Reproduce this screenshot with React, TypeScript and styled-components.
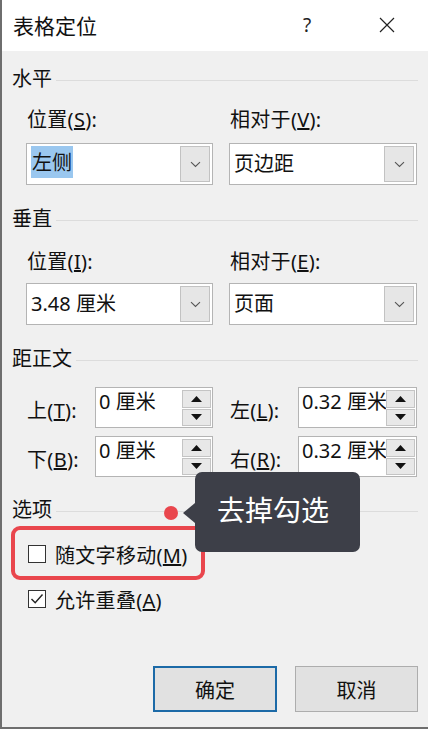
import styled, { createGlobalStyle } from "styled-components";

const GlobalStyle = createGlobalStyle`
  html, body {
    margin: 0;
    padding: 0;
    background: #f0f0f0;
  }
  body {
    font-family: "Noto Sans", "Noto Sans CJK SC", sans-serif;
    color: #111;
  }
`;

const Window = styled.div`
  position: relative;
  width: 428px;
  height: 729px;
  box-sizing: border-box;
  display: flex;
  flex-direction: column;
  border-left: 2px solid #6e6e6e;
  border-bottom: 2px solid #6e6e6e;
  background: #f0f0f0;
  overflow: hidden;
`;

const TitleBar = styled.div`
  height: 51px;
  flex-shrink: 0;
  background: #fff;
  display: flex;
  align-items: center;
  padding-left: 11px;
  padding-bottom: 2px;
  box-sizing: border-box;
`;

const Title = styled.div`
  font-size: 21px;
  flex: 1;
`;

const TitleButton = styled.div<{ $gap?: number }>`
  width: 36px;
  display: flex;
  justify-content: center;
  font-size: 19px;
  color: #222;
  margin-right: ${(p) => p.$gap ?? 0}px;
`;

const Body = styled.div`
  flex: 1;
  display: flex;
  flex-direction: column;
  padding: 16px 10px 15px 10px;
`;

const GroupHeader = styled.div<{ $top: number }>`
  display: flex;
  align-items: center;
  gap: 4px;
  font-size: 20px;
  line-height: 24px;
  margin-top: ${(p) => p.$top}px;

  &::after {
    content: "";
    flex: 1;
    height: 1px;
    background: #dcdcdc;
    margin-top: 2px;
  }
`;

const FieldGrid = styled.div<{ $top: number; $gap?: number }>`
  display: grid;
  grid-template-columns: 187px 188px;
  column-gap: 16px;
  row-gap: ${(p) => p.$gap ?? 0}px;
  padding-left: 14px;
  margin-top: ${(p) => p.$top}px;
`;

const FieldLabel = styled.div`
  font-size: 20px;
  line-height: 24px;
  padding-left: 1px;
  letter-spacing: 0.3px;
`;

const Combo = styled.div<{ $top: number }>`
  height: 42px;
  box-sizing: border-box;
  margin-top: ${(p) => p.$top}px;
  background: #fff;
  border: 1px solid #b4b4b4;
  display: flex;
  align-items: stretch;
  padding: 2px;
`;

const ComboText = styled.div`
  flex: 1;
  display: flex;
  align-items: center;
  font-size: 20px;
  padding: 0 0 4px 2px;
  white-space: nowrap;
`;

const Selected = styled.span`
  background: #9ac7ef;
  padding: 1px 1px 2px;
`;

const ComboButton = styled.div`
  width: 30px;
  background: #e6e6e6;
  border: 1px solid #c2c2c2;
  box-sizing: border-box;
  display: flex;
  align-items: center;
  justify-content: center;
`;

const SpinCell = styled.div`
  display: flex;
  align-items: center;
`;

const SpinLabel = styled.div`
  width: 68px;
  flex-shrink: 0;
  font-size: 20px;
  padding-left: 1px;
  padding-top: 4px;
  letter-spacing: 0.3px;
`;

const SpinBox = styled.div`
  width: 119px;
  height: 41px;
  box-sizing: border-box;
  background: #fff;
  border: 1px solid #b4b4b4;
  display: flex;
  padding: 1px 1px 1px 2px;
`;

const SpinText = styled.div`
  flex: 1;
  overflow: hidden;
  white-space: nowrap;
  font-size: 20px;
  line-height: 26px;
  padding: 0 0 0 1px;
`;

const SpinButtons = styled.div`
  width: 29px;
  display: flex;
  flex-direction: column;
  gap: 1px;
  padding-top: 1px;
`;

const SpinButton = styled.div`
  flex: 1;
  background: #e8e8e8;
  border: 1px solid #c4c4c4;
  display: flex;
  align-items: center;
  justify-content: center;
`;

const CheckRow = styled.label<{ $top: number }>`
  display: flex;
  align-items: center;
  gap: 9px;
  height: 28px;
  padding-left: 16px;
  margin-top: ${(p) => p.$top}px;
  font-size: 20px;
  letter-spacing: 0.3px;
`;

const Box = styled.span`
  width: 18px;
  height: 18px;
  box-sizing: border-box;
  border: 1px solid #333;
  background: #fff;
  display: flex;
  align-items: center;
  justify-content: center;
`;

const ButtonRow = styled.div`
  margin-top: auto;
  display: flex;
  justify-content: flex-end;
  gap: 18px;
`;

const DialogButton = styled.div<{ $primary?: boolean }>`
  width: ${(p) => (p.$primary ? 124 : 123)}px;
  height: 46px;
  box-sizing: border-box;
  background: #e1e1e1;
  border: ${(p) => (p.$primary ? "2px solid #1c6aa7" : "1px solid #adadad")};
  display: flex;
  align-items: center;
  justify-content: center;
  font-size: 20px;
`;

const Annotation = styled.div`
  position: absolute;
  left: 9px;
  top: 526px;
  width: 194px;
  height: 54px;
  box-sizing: border-box;
  border: 4px solid #e9464d;
  border-radius: 9px;
  pointer-events: none;
`;

const Dot = styled.div`
  position: absolute;
  left: 162px;
  top: 506px;
  width: 14px;
  height: 14px;
  border-radius: 50%;
  background: #e9464d;
`;

const Tooltip = styled.div`
  position: absolute;
  left: 193px;
  top: 472px;
  width: 165px;
  height: 80px;
  box-sizing: border-box;
  background: #3d3f48;
  border-radius: 7px;
  color: #fff;
  font-size: 28px;
  display: flex;
  align-items: center;
  padding-left: 22px;
  padding-bottom: 6px;

  &::before {
    content: "";
    position: absolute;
    left: -12px;
    top: 31px;
    border-top: 10px solid transparent;
    border-bottom: 10px solid transparent;
    border-right: 12px solid #3d3f48;
  }
`;

const Chevron = () => (
  <svg width="11" height="7" viewBox="0 0 11 7">
    <path d="M1 1.2 L5.5 5.5 L10 1.2" fill="none" stroke="#555" strokeWidth="1.1" />
  </svg>
);

const Arrow = ({ up }: { up?: boolean }) => (
  <svg width="11" height="6" viewBox="0 0 11 6">
    <path d={up ? "M0 6 L5.5 0 L11 6 Z" : "M0 0 L5.5 6 L11 0 Z"} fill="#111" />
  </svg>
);

const Spin = ({ label, k, value }: { label: string; k: string; value: string }) => (
  <SpinCell>
    <SpinLabel>
      {label}(<u>{k}</u>):
    </SpinLabel>
    <SpinBox>
      <SpinText>{value}</SpinText>
      <SpinButtons>
        <SpinButton>
          <Arrow up />
        </SpinButton>
        <SpinButton>
          <Arrow />
        </SpinButton>
      </SpinButtons>
    </SpinBox>
  </SpinCell>
);

const App = () => {
  return (
    <>
      <GlobalStyle />
      <Window>
        <TitleBar>
          <Title>表格定位</Title>
          <TitleButton $gap={44}>?</TitleButton>
          <TitleButton $gap={23}>
            <svg width="16" height="16" viewBox="0 0 16 16">
              <path d="M1 1 L15 15 M15 1 L1 15" stroke="#222" strokeWidth="1.2" />
            </svg>
          </TitleButton>
        </TitleBar>
        <Body>
          <GroupHeader $top={0}>水平</GroupHeader>
          <FieldGrid $top={17}>
            <FieldLabel>
              位置(<u>S</u>):
            </FieldLabel>
            <FieldLabel>
              相对于(<u>V</u>):
            </FieldLabel>
            <Combo $top={11}>
              <ComboText>
                <Selected>左侧</Selected>
              </ComboText>
              <ComboButton>
                <Chevron />
              </ComboButton>
            </Combo>
            <Combo $top={11}>
              <ComboText>页边距</ComboText>
              <ComboButton>
                <Chevron />
              </ComboButton>
            </Combo>
          </FieldGrid>

          <GroupHeader $top={22}>垂直</GroupHeader>
          <FieldGrid $top={19}>
            <FieldLabel>
              位置(<u>I</u>):
            </FieldLabel>
            <FieldLabel>
              相对于(<u>E</u>):
            </FieldLabel>
            <Combo $top={9}>
              <ComboText>3.48 厘米</ComboText>
              <ComboButton>
                <Chevron />
              </ComboButton>
            </Combo>
            <Combo $top={9}>
              <ComboText>页面</ComboText>
              <ComboButton>
                <Chevron />
              </ComboButton>
            </Combo>
          </FieldGrid>

          <GroupHeader $top={22}>距正文</GroupHeader>
          <FieldGrid $top={16} $gap={8}>
            <Spin label="上" k="T" value="0 厘米" />
            <Spin label="左" k="L" value="0.32 厘米" />
            <Spin label="下" k="B" value="0 厘米" />
            <Spin label="右" k="R" value="0.32 厘米" />
          </FieldGrid>

          <GroupHeader $top={21}>选项</GroupHeader>
          <CheckRow $top={18}>
            <Box />
            <span>
              随文字移动(<u>M</u>)
            </span>
          </CheckRow>
          <CheckRow $top={17}>
            <Box>
              <svg width="14" height="12" viewBox="0 0 14 12">
                <path d="M1.5 6 L5.2 9.8 L12.5 1.5" fill="none" stroke="#222" strokeWidth="1.4" />
              </svg>
            </Box>
            <span>
              允许重叠(<u>A</u>)
            </span>
          </CheckRow>

          <ButtonRow>
            <DialogButton $primary>确定</DialogButton>
            <DialogButton>取消</DialogButton>
          </ButtonRow>
        </Body>

        <Annotation />
        <Dot />
        <Tooltip>去掉勾选</Tooltip>
      </Window>
    </>
  );
};

export default App;
